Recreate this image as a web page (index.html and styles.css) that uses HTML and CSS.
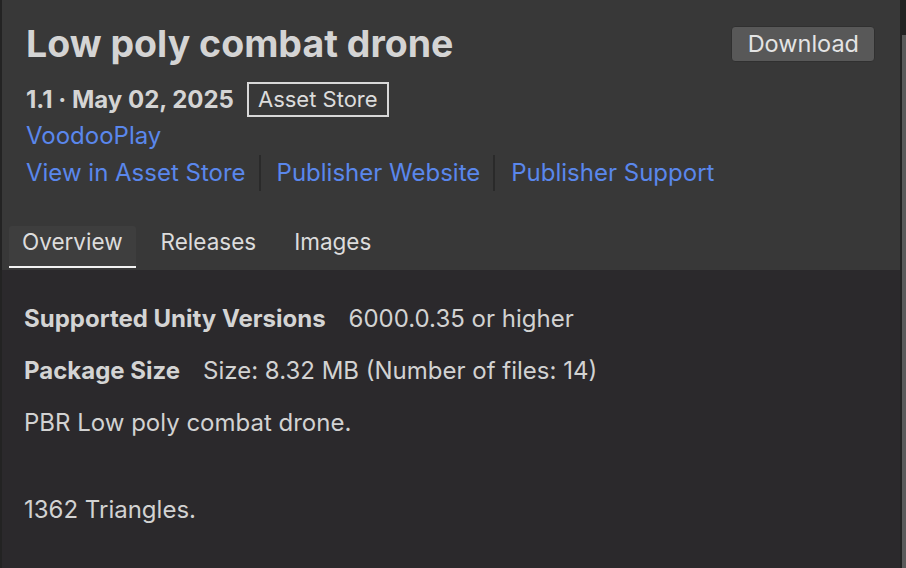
FILE: index.html
```html
<!DOCTYPE html>
<html lang="en">
<head>
<meta charset="utf-8">
<title>Low poly combat drone</title>
<link rel="stylesheet" href="styles.css">
</head>
<body>
<div class="window">
  <div class="main">
    <header class="head">
      <div class="title-row">
        <h1 class="title">Low poly combat drone</h1>
        <button class="btn">Download</button>
      </div>
      <div class="meta">
        <span class="version">1.1 · May 02, 2025</span>
        <span class="badge">Asset Store</span>
      </div>
      <a class="link author">VoodooPlay</a>
      <div class="links">
        <a class="link">View in Asset Store</a>
        <span class="sep"></span>
        <a class="link">Publisher Website</a>
        <span class="sep"></span>
        <a class="link">Publisher Support</a>
      </div>
    </header>
    <nav class="tabs">
      <div class="tab active">Overview</div>
      <div class="tab">Releases</div>
      <div class="tab">Images</div>
    </nav>
    <section class="content">
      <div class="prop"><span class="label">Supported Unity Versions</span><span class="value">6000.0.35 or higher</span></div>
      <div class="prop"><span class="label">Package Size</span><span class="value">Size: 8.32 MB (Number of files: 14)</span></div>
      <p class="desc">PBR Low poly combat drone.</p>
      <p class="desc gap">1362 Triangles.</p>
    </section>
  </div>
  <div class="scroll"><div class="thumb"></div></div>
</div>
</body>
</html>
```

FILE: styles.css
```css
* { box-sizing: border-box; }
html, body { margin: 0; padding: 0; }
body {
  width: 906px;
  height: 568px;
  overflow: hidden;
  background: #2b292c;
  font-family: Inter, "Noto Sans", sans-serif;
  color: #d2d2d2;
}
.window {
  display: flex;
  height: 568px;
  border-left: 2px solid #232323;
}
.main {
  flex: 1;
  display: flex;
  flex-direction: column;
  min-width: 0;
}
.head {
  background: #383838;
  padding: 22px 25px 0 24px;
  display: flex;
  flex-direction: column;
}
.title-row {
  display: flex;
  justify-content: space-between;
  align-items: flex-start;
}
.title {
  margin: 0;
  font-size: 37.5px;
  font-weight: 700;
  line-height: 44px;
  color: #d4d4d4;
}
.btn {
  margin-top: 4px;
  height: 36px;
  padding: 0 15px 0 16px;
  background: #585858;
  border: 1px solid #303030;
  border-radius: 4px;
  color: #e4e4e4;
  font-family: inherit;
  font-size: 23.5px;
  line-height: 34px;
}
.meta {
  display: flex;
  align-items: center;
  gap: 13px;
  margin-top: 16px;
}
.version {
  font-size: 24px;
  font-weight: 700;
  color: #d4d4d4;
}
.badge {
  border: 2px solid #d8d8d8;
  padding: 1px 9px;
  font-size: 22px;
  line-height: 29px;
  color: #dcdcdc;
}
.link {
  color: #5a87ec;
  font-size: 24px;
  line-height: 34px;
}
.author { margin-top: 2px; }
.links {
  display: flex;
  align-items: center;
  margin-top: 2px;
}
.sep {
  width: 2px;
  height: 36px;
  margin: 0 16px 0 13px;
  background: #2a2a2a;
}
.tabs {
  background: #383838;
  display: flex;
  padding: 35px 0 2px 7px;
}
.tab {
  font-size: 22.5px;
  line-height: 32px;
  padding: 0 13px 8px;
  margin-right: 12px;
  color: #dcdcdc;
  border-bottom: 2px solid transparent;
}
.tab.active {
  background: #3e3e3e;
  border-radius: 3px 3px 0 0;
  border-bottom-color: #f2f2f2;
}
.content {
  flex: 1;
  padding: 31px 22px 0 22px;
}
.prop {
  display: flex;
  gap: 23px;
  font-size: 24px;
  line-height: 36px;
  margin-bottom: 16px;
}
.label { font-weight: 700; color: #d4d4d4; }
.value { color: #d2d2d2; }
.desc {
  margin: 0;
  font-size: 24px;
  line-height: 36px;
  color: #d2d2d2;
}
.desc.gap { margin-top: 51px; }
.scroll {
  width: 6px;
  display: flex;
  flex-direction: column;
  background: #232323;
  padding: 35px 0 0 2px;
}
.thumb {
  flex: 1;
  background: #5a5a5a;
}
```
